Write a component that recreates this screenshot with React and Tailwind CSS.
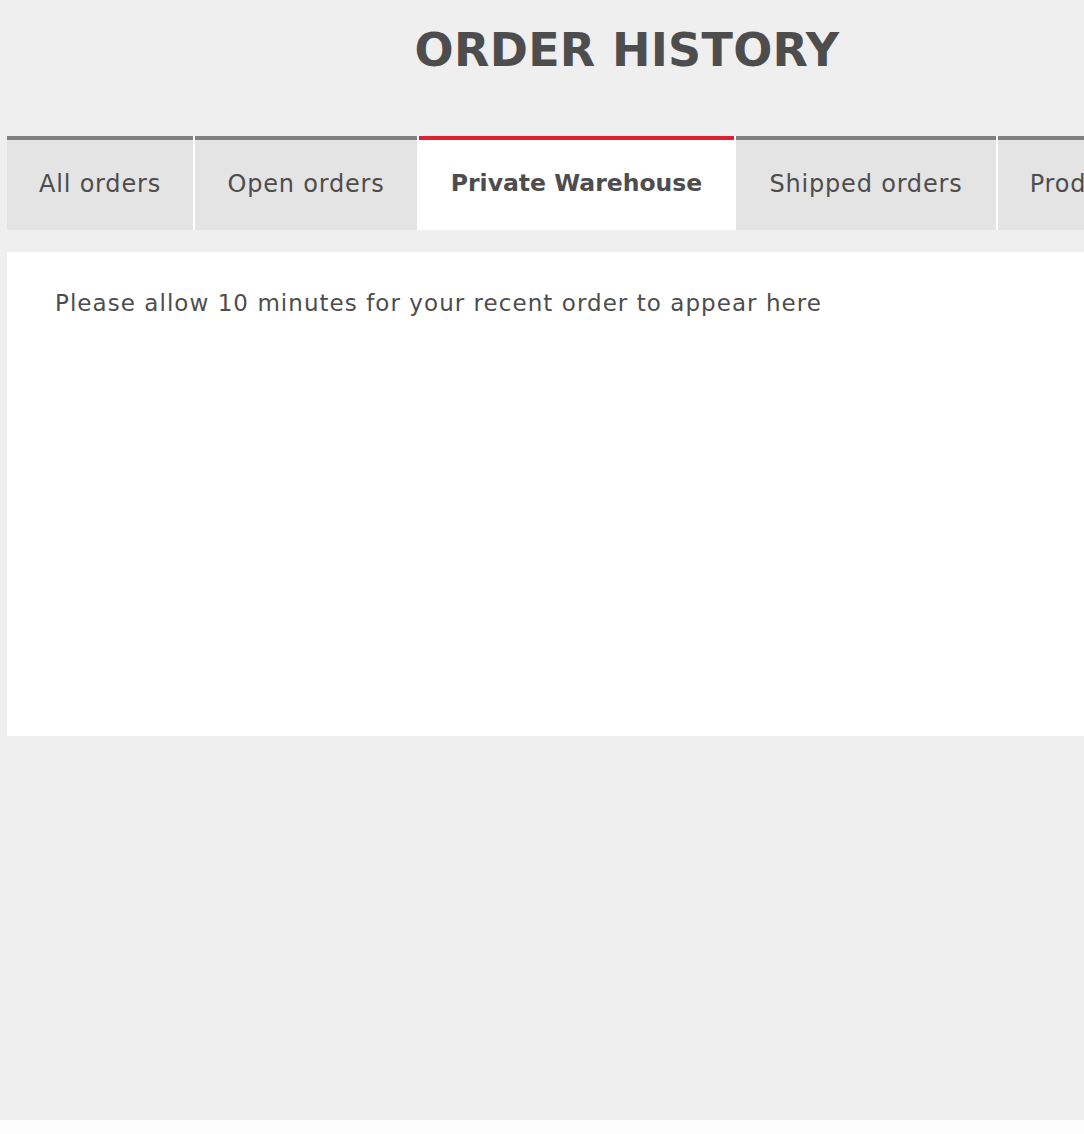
export default function App() {
  const tabs = [
    { label: 'All orders', w: 'w-[186px]' },
    { label: 'Open orders', w: 'w-[222px]' },
    { label: 'Private Warehouse', w: 'w-[315px]', active: true },
    { label: 'Shipped orders', w: 'w-[260px]' },
    { label: 'Product returns', w: 'w-[260px]' },
  ];

  return (
    <div
      className="min-h-[1134px] w-full overflow-hidden bg-[#efefef] text-[#4d4d4d] flex flex-col"
      style={{ fontFamily: '"DejaVu Sans", "Noto Sans", sans-serif' }}
    >
      <div className="w-[1240px] ml-[7px] flex-1">
        <h1 className="text-center text-[46px] leading-none font-bold tracking-[0.3px] pt-[27px] h-[136px]">
          ORDER HISTORY
        </h1>

        <div className="flex gap-[2px] bg-white h-[94px]">
          {tabs.map((t) => (
            <div
              key={t.label}
              className={
                'shrink-0 flex items-center justify-center border-t-4 whitespace-nowrap pb-[2px] ' +
                t.w +
                (t.active
                  ? ' bg-white border-[#e0202e] font-bold text-[23.5px]'
                  : ' bg-[#e4e4e4] border-[#808080] text-[24px] tracking-[0.8px]')
              }
            >
              {t.label}
            </div>
          ))}
        </div>

        <div className="mt-[22px] bg-white h-[484px] px-[48px] pt-[37px]">
          <p className="text-[23px] leading-[28px] tracking-[1.05px]">
            Please allow 10 minutes for your recent order to appear here
          </p>
        </div>
      </div>

      <footer className="h-[14px] bg-[#fcfcfc]" />
    </div>
  );
}
